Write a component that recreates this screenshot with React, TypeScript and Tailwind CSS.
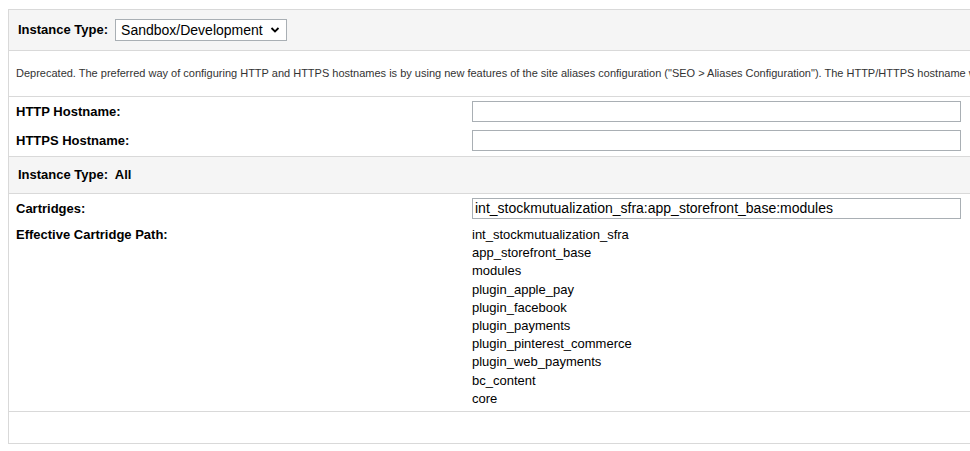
import React from "react";

const paths = [
  "int_stockmutualization_sfra",
  "app_storefront_base",
  "modules",
  "plugin_apple_pay",
  "plugin_facebook",
  "plugin_payments",
  "plugin_pinterest_commerce",
  "plugin_web_payments",
  "bc_content",
  "core",
];

function Row({ label, children, className = "" }: { label: string; children?: React.ReactNode; className?: string }) {
  return (
    <div className={`flex ${className}`}>
      <div className="w-[463px] shrink-0 pl-[7px] text-[13px] leading-[18px] font-bold text-black">{label}</div>
      <div className="flex-1">{children}</div>
    </div>
  );
}

function TextInput({ value = "" }: { value?: string }) {
  return (
    <input
      readOnly
      value={value}
      className="block w-[489px] h-[21px] border border-[#a9afb4] bg-white px-[2px] text-[14px] text-black outline-none"
      style={{ fontFamily: '"Liberation Sans", Arial, sans-serif' }}
    />
  );
}

export default function App() {
  return (
    <div className="w-[970px] h-[451px] overflow-hidden bg-white" style={{ fontFamily: '"Liberation Sans", Arial, sans-serif' }}>
      <div className="ml-[8px] mt-[9px] w-[1000px] border-l border-t border-b border-[#d9d9d9]">
        {/* instance type header */}
        <div className="h-[41px] bg-[#f5f5f5] flex items-center pl-[9px] gap-[7px] border-b border-[#d9d9d9]">
          <span className="text-[13px] font-bold text-black">Instance Type:</span>
          <div className="h-[22px] w-[172px] border border-[#a9afb4] bg-white flex items-center justify-between pl-[5px] pr-[6px]">
            <span className="text-[14px] text-black">Sandbox/Development</span>
            <svg width="10" height="8" viewBox="0 0 10 8">
              <path d="M1.5 2 L5 5.5 L8.5 2" fill="none" stroke="#000" strokeWidth="1.8" />
            </svg>
          </div>
        </div>

        {/* deprecation note */}
        <div className="h-[46px] flex items-center pl-[7px] border-b border-[#d9d9d9] whitespace-nowrap overflow-hidden">
          <span className="text-[11px] text-[#333]">
            Deprecated. The preferred way of configuring HTTP and HTTPS hostnames is by using new features of the site aliases configuration ("SEO &gt; Aliases Configuration"). The HTTP/HTTPS hostname will be removed.
          </span>
        </div>

        {/* hostnames */}
        <div className="h-[60px] flex flex-col pt-[4px] gap-[8px] border-b border-[#d9d9d9]">
          <Row label="HTTP Hostname:" className="items-center">
            <TextInput />
          </Row>
          <Row label="HTTPS Hostname:" className="items-center">
            <TextInput />
          </Row>
        </div>

        {/* instance type all */}
        <div className="h-[37px] bg-[#f5f5f5] flex items-center pl-[9px] border-b border-[#d9d9d9]">
          <span className="text-[13px] font-bold text-black">Instance Type:&nbsp; All</span>
        </div>

        {/* cartridges */}
        <div className="h-[218px] flex flex-col pt-[4px] border-b border-[#d9d9d9]">
          <Row label="Cartridges:" className="items-center">
            <TextInput value="int_stockmutualization_sfra:app_storefront_base:modules" />
          </Row>
          <Row label="Effective Cartridge Path:" className="mt-[7px]">
            <div className="flex flex-col">
              {paths.map((p) => (
                <div key={p} className="text-[13px] leading-[18.2px] text-black">{p}</div>
              ))}
            </div>
          </Row>
        </div>

        <div className="h-[31px]" />
      </div>
    </div>
  );
}
